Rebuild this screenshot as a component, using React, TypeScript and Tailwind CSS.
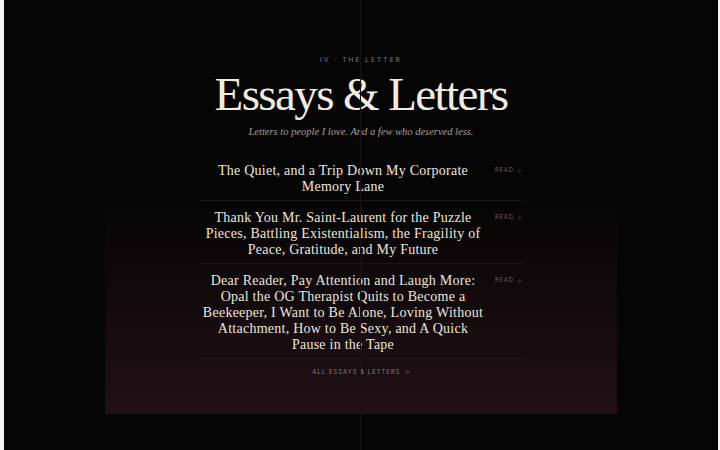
import { ArrowRight } from 'lucide-react';

const letters = [
  { title: 'The Quiet, and a Trip Down My Corporate Memory Lane' },
  {
    title:
      'Thank You Mr. Saint-Laurent for the Puzzle Pieces, Battling Existentialism, the Fragility of Peace, Gratitude, and My Future',
  },
  {
    title:
      'Dear Reader, Pay Attention and Laugh More: Opal the OG Therapist Quits to Become a Beekeeper, I Want to Be Alone, Loving Without Attachment, How to Be Sexy, and A Quick Pause in the Tape',
  },
];

const serif = { fontFamily: '"Liberation Serif", "DejaVu Serif", serif' };
const sans = { fontFamily: 'Inter, "Liberation Sans", sans-serif' };

export default function App() {
  return (
    <div className="w-full h-[450px] bg-[#f4f4f4] pl-[4px] pr-[2px]">
      <div className="relative h-full bg-[#050505] flex justify-center overflow-hidden">
        {/* centre rule */}
        <div className="absolute inset-y-0 left-[356px] w-px bg-[#1a1314]" />

        <section className="w-[512px] h-[414px] bg-gradient-to-b from-[#050505] from-45% to-[#221016] flex flex-col items-center pt-[57px]">
          <p style={sans} className="text-[6.5px] tracking-[0.32em] uppercase text-[#8e7c7e] leading-none">
            IV · The Letter
          </p>
          <h1
            style={serif}
            className="mt-[8px] text-[47px] leading-[44px] tracking-[-1.6px] text-[#f1ebe0]"
          >
            Essays &amp; Letters
          </h1>
          <p style={serif} className="mt-[11px] text-[10.5px] italic text-[#a89f98] leading-none">
            Letters to people I love. And a few who deserved less.
          </p>

          <ul className="mt-[17px] w-[322px]">
            {letters.map((l) => (
              <li key={l.title} className="flex items-start gap-[9px] pt-[9px] pb-[5px] border-b border-[#1c1718]">
                <h3
                  style={serif}
                  className="flex-1 text-center text-[14px] leading-[16px] tracking-[0.25px] text-[#ece5da]"
                >
                  {l.title}
                </h3>
                <span
                  style={sans}
                  className="mt-[5px] flex items-center gap-[2px] text-[5.5px] tracking-[0.2em] uppercase text-[#6e6364] leading-none whitespace-nowrap"
                >
                  Read <ArrowRight className="w-[6px] h-[6px]" strokeWidth={1.5} />
                </span>
              </li>
            ))}
          </ul>

          <a
            style={sans}
            className="mt-[10px] flex items-center gap-[3px] text-[5.7px] tracking-[0.2em] uppercase text-[#8f8384] leading-none"
          >
            All Essays &amp; Letters <ArrowRight className="w-[6px] h-[6px]" strokeWidth={1.5} />
          </a>
        </section>
      </div>
    </div>
  );
}
